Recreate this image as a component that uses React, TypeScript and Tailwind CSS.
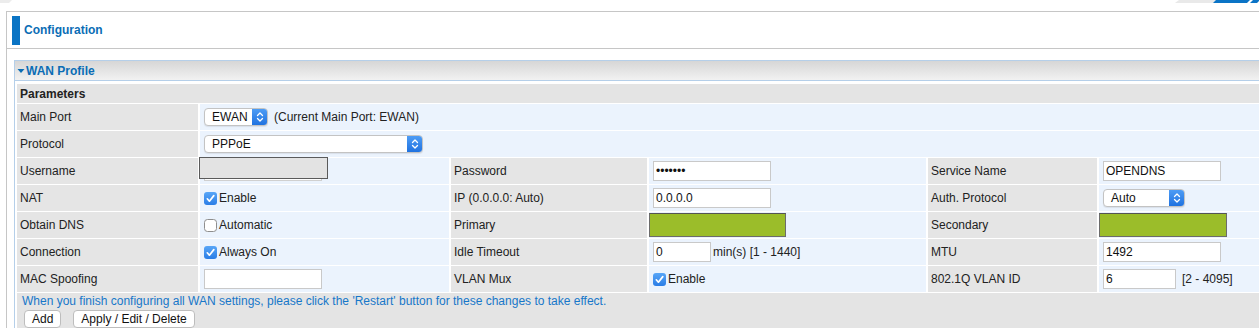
import React from "react";

const Label = ({ children }: { children?: React.ReactNode }) => (
  <div className="h-[26px] bg-[#e5e5e5] flex items-center pl-[3px] text-[12px] text-[#222]">{children}</div>
);

const Val = ({ children, span }: { children?: React.ReactNode; span?: string }) => (
  <div className={`h-[26px] bg-[#ebf3fd] flex items-center pl-[4px] text-[12px] text-[#222] ${span ?? ""}`}>{children}</div>
);

const Check = ({ checked }: { checked: boolean }) =>
  checked ? (
    <svg width="13" height="13" viewBox="0 0 13 13" className="mr-[2px] shrink-0">
      <defs>
        <linearGradient id="cg" x1="0" y1="0" x2="0" y2="1">
          <stop offset="0" stopColor="#58a6f7" />
          <stop offset="1" stopColor="#2a7de6" />
        </linearGradient>
      </defs>
      <rect x="0" y="0" width="13" height="13" rx="3" fill="url(#cg)" />
      <path d="M3.3 6.8 L5.4 9.2 L9.8 3.6" stroke="#fff" strokeWidth="1.7" fill="none" strokeLinecap="round" strokeLinejoin="round" />
    </svg>
  ) : (
    <svg width="13" height="13" viewBox="0 0 13 13" className="mr-[2px] shrink-0">
      <rect x="0.5" y="0.5" width="12" height="12" rx="3" fill="#fff" stroke="#8e8e8e" />
    </svg>
  );

const Select = ({ text, w }: { text: string; w: string }) => (
  <div className={`${w} h-[18px] rounded-[4px] border border-[#c3c3c3] bg-white flex items-stretch overflow-hidden shadow-[0_1px_1px_rgba(0,0,0,0.08)]`}>
    <div className="flex-1 flex items-center pl-[7px] text-[12px] text-[#111]">{text}</div>
    <div className="w-[15px] bg-gradient-to-b from-[#4d9cf5] to-[#1f72e0] flex items-center justify-center">
      <svg width="8" height="12" viewBox="0 0 8 12">
        <path d="M1.5 4.5 L4 2 L6.5 4.5 M1.5 7.5 L4 10 L6.5 7.5" stroke="#fff" strokeWidth="1.3" fill="none" strokeLinecap="round" strokeLinejoin="round" />
      </svg>
    </div>
  </div>
);

const Input = ({ value, w, h = "h-[20px]" }: { value?: string; w: string; h?: string }) => (
  <div className={`${w} ${h} border border-[#c9c9c9] bg-white flex items-center pl-[2px] text-[12px] text-[#111]`}>{value}</div>
);

const Green = ({ w }: { w: string }) => (
  <div className={`${w} h-[24px] bg-[#9bbd2a] border border-[#6c6c6c] border-t-[#555]`} />
);

export default function App() {
  return (
    <div className="relative w-[1259px] h-[328px] overflow-hidden bg-white font-['Liberation_Sans',Arial,sans-serif]">
      {/* decorations at top */}
      <svg className="absolute left-0 top-0" width="14" height="4" viewBox="0 0 14 4">
        <path d="M0 0 H12 L9 3 H0 Z" fill="#ececec" />
      </svg>
      <svg className="absolute right-0 top-0" width="90" height="4" viewBox="0 0 90 4">
        <path d="M6 3 L10 0 H50 L46 3 Z" fill="#e9e9e9" />
        <path d="M44 3 L47 0 H90 V1 L88 3 Z" fill="#0b74c6" />
        <path d="M78 3 L81 0 H84 L81 3 Z" fill="#fff" />
      </svg>

      <div className="ml-[6px] mt-[11px] w-[1320px] border-l border-t border-[#c6c6c6]">
        {/* header */}
        <div className="h-[37px] border-b border-[#c6c6c6] flex items-center">
          <div className="ml-[5px] w-[8px] h-[29px] bg-[#0a74c4]" />
          <div className="ml-[4px] text-[12px] font-bold text-[#0b6db5]">Configuration</div>
        </div>

        {/* body */}
        <div className="pt-[11px] pl-[7px]">
          <div className="border-l border-t border-[#b5cfe9]">
            <div className="h-[20px] border-b border-[#b5cfe9] bg-gradient-to-b from-[#d6d6d6] to-[#f2f2f2] flex items-center">
              <svg className="ml-[2px]" width="8" height="6" viewBox="0 0 8 6">
                <path d="M0.5 1 H7.5 L4 5 Z" fill="#0b6db5" />
              </svg>
              <span className="ml-[1px] text-[12px] font-bold text-[#0b6db5]">WAN Profile</span>
            </div>

            <div className="pl-[2px] pt-[3px]">
              <div className="grid grid-cols-[181px_249px_196px_277px_169px_1fr] gap-x-[2px] gap-y-px">
                <div className="col-span-6 h-[19px] bg-[#e4e4e4] flex items-center pl-[3px] text-[12px] font-bold text-[#222]">
                  Parameters
                </div>

                <Label>Main Port</Label>
                <Val span="col-span-5">
                  <Select text="EWAN" w="w-[64px]" />
                  <span className="ml-[6px]">(Current Main Port: EWAN)</span>
                </Val>

                <Label>Protocol</Label>
                <Val span="col-span-5">
                  <Select text="PPPoE" w="w-[219px]" />
                </Val>

                <Label>Username</Label>
                <Val>
                  <div className="relative w-[250px] h-[26px]">
                    <div className="absolute left-0 top-[3px] w-[118px] h-[20px] border border-[#d0d0d0] bg-white" />
                    <div className="absolute left-[-5px] top-[-1px] w-[129px] h-[22px] bg-[#e3e3e3] border border-[#5a5a5a]" />
                  </div>
                </Val>
                <Label>Password</Label>
                <Val>
                  <Input w="w-[118px]" value="•••••••" />
                </Val>
                <Label>Service Name</Label>
                <Val>
                  <Input w="w-[118px]" value="OPENDNS" />
                </Val>

                <Label>NAT</Label>
                <Val>
                  <Check checked />
                  Enable
                </Val>
                <Label>IP (0.0.0.0: Auto)</Label>
                <Val>
                  <Input w="w-[118px]" value="0.0.0.0" />
                </Val>
                <Label>Auth. Protocol</Label>
                <Val>
                  <Select text="Auto" w="w-[82px]" />
                </Val>

                <Label>Obtain DNS</Label>
                <Val>
                  <Check checked={false} />
                  Automatic
                </Val>
                <Label>Primary</Label>
                <div className="h-[26px] bg-[#ebf3fd] flex items-center">
                  <Green w="w-[137px]" />
                </div>
                <Label>Secondary</Label>
                <div className="h-[26px] bg-[#ebf3fd] flex items-end pb-[1px]">
                  <Green w="w-[128px]" />
                </div>

                <Label>Connection</Label>
                <Val>
                  <Check checked />
                  Always On
                </Val>
                <Label>Idle Timeout</Label>
                <Val>
                  <Input w="w-[58px]" value="0" h="h-[20px]" />
                  <span className="ml-[2px]">min(s) [1 - 1440]</span>
                </Val>
                <Label>MTU</Label>
                <Val>
                  <Input w="w-[118px]" value="1492" />
                </Val>

                <Label>MAC Spoofing</Label>
                <Val>
                  <Input w="w-[118px]" />
                </Val>
                <Label>VLAN Mux</Label>
                <Val>
                  <Check checked />
                  Enable
                </Val>
                <Label>802.1Q VLAN ID</Label>
                <Val>
                  <Input w="w-[73px]" value="6" />
                  <span className="ml-[6px]">[2 - 4095]</span>
                </Val>

                <div className="col-span-6 bg-[#e4e4e4] pl-[5px] pt-[1px] h-[40px]">
                  <div className="text-[12px] text-[#1777c9] leading-[14px]">
                    When you finish configuring all WAN settings, please click the 'Restart' button for these changes to take effect.
                  </div>
                  <div className="flex gap-[12px] mt-[2px] ml-[2px]">
                    <div className="h-[18px] px-[7px] rounded-[4px] border border-[#bdbdbd] bg-white flex items-center text-[12px] text-[#111]">Add</div>
                    <div className="h-[18px] px-[7px] rounded-[4px] border border-[#bdbdbd] bg-white flex items-center text-[12px] text-[#111]">Apply / Edit / Delete</div>
                  </div>
                </div>
              </div>
            </div>
          </div>
        </div>
      </div>
    </div>
  );
}
